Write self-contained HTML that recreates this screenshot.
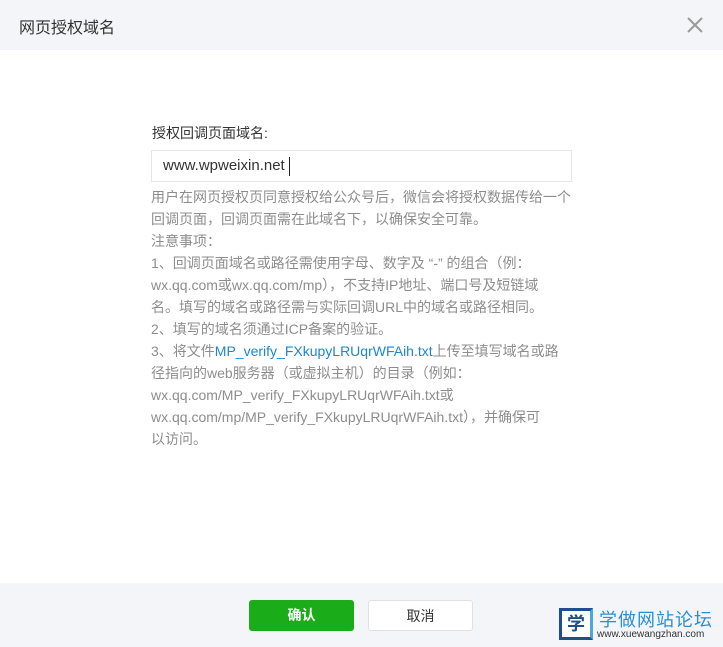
<!DOCTYPE html>
<html><head><meta charset="utf-8"><style>
body{margin:0;width:723px;height:647px;position:relative;font-family:"Liberation Sans","Noto Sans CJK SC",sans-serif;background:#fff;overflow:hidden}
.hd{position:absolute;left:0;top:0;width:723px;height:50px;background:#f4f5f9;}
.hd span{position:absolute;left:19px;top:14px;font-size:16px;color:#333}
.x{position:absolute;right:18px;top:15px;width:20px;height:20px}
.lbl{position:absolute;left:152px;top:123px;font-size:14px;color:#333}
.inp{position:absolute;left:151px;top:150px;width:419px;height:30px;border:1px solid #e4e6e9;box-sizing:content-box}
.inp span{position:absolute;left:11px;top:6px;font-size:15px;color:#333}
.inp i{position:absolute;left:137px;top:6px;width:1px;height:19px;background:#222}
.desc{position:absolute;left:151px;top:186px;width:430px;font-size:14px;line-height:22px;color:#8d8d8d;white-space:nowrap}
.desc a{color:#1a87d3;text-decoration:none}
.ft{position:absolute;left:0;top:583px;width:723px;height:64px;background:#f4f5f9}
.b{position:absolute;top:600px;width:105px;height:31px;line-height:31px;text-align:center;font-size:14px;border-radius:3px;box-sizing:border-box}
.ok{left:249px;background:#1aad19;color:#fff;font-weight:bold}
.no{left:368px;background:#fff;border:1px solid #e0e1e3;color:#333}
</style></head><body>
<div class="hd"><span>网页授权域名</span>
<svg class="x" viewBox="0 0 20 20"><path d="M3 3L17 17M17 3L3 17" stroke="#9a9a9a" stroke-width="2"/></svg></div>
<div class="lbl">授权回调页面域名:</div>
<div class="inp"><span>www.wpweixin.net</span><i></i></div>
<div class="desc">用户在网页授权页同意授权给公众号后，微信会将授权数据传给一个<br>回调页面，回调页面需在此域名下，以确保安全可靠。<br>注意事项：<br>1、回调页面域名或路径需使用字母、数字及 “-” 的组合（例：<br>wx.qq.com或wx.qq.com/mp），不支持IP地址、端口号及短链域<br>名。填写的域名或路径需与实际回调URL中的域名或路径相同。<br>2、填写的域名须通过ICP备案的验证。<br>3、将文件<a>MP_verify_FXkupyLRUqrWFAih.txt</a>上传至填写域名或路<br>径指向的web服务器（或虚拟主机）的目录（例如：<br>wx.qq.com/MP_verify_FXkupyLRUqrWFAih.txt或<br>wx.qq.com/mp/MP_verify_FXkupyLRUqrWFAih.txt），并确保可<br>以访问。</div>
<div class="ft"></div>
<div class="b ok">确认</div>
<div class="b no">取消</div>
<div style="position:absolute;left:559px;top:608px;width:34px;height:32px;border:3px solid #1f4f8a;border-right-color:#4aa8e0;box-sizing:border-box;background:#fff;font-size:18px;color:#1f4f8a;text-align:center;line-height:26px;font-weight:bold">学</div>
<div style="position:absolute;left:599px;top:606px;font-size:18px;color:#2a8fd8;letter-spacing:1px">学做网站论坛</div>
<div style="position:absolute;left:597px;top:629px;font-size:10px;color:#333">www.xuewangzhan.com</div>
</body></html>
